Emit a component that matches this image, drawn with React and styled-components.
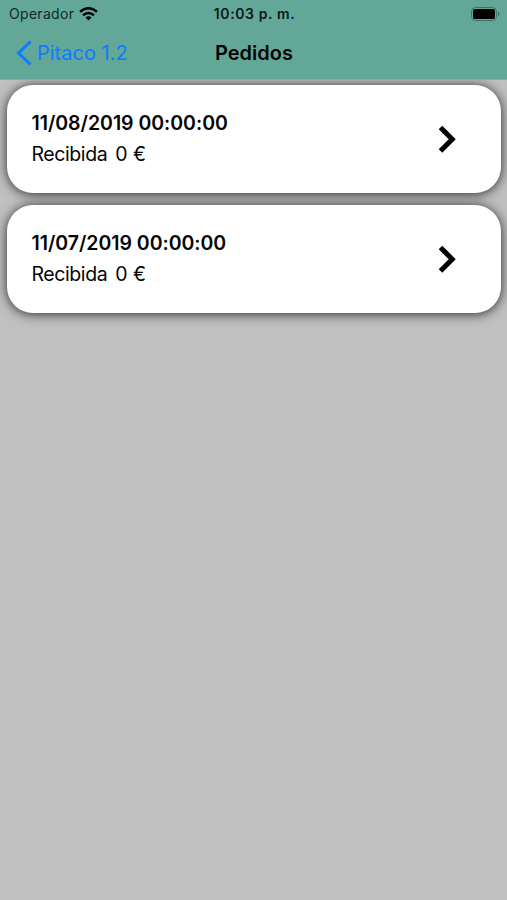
import React from "react"
import styled, { createGlobalStyle } from "styled-components"

const GlobalStyle = createGlobalStyle`
  body {
    margin: 0;
    background-color: #c0c0c0;
    font-family: Inter, "Liberation Sans", sans-serif;
    color: #050505;
  }
`
const Screen = styled.div`
  min-height: 900px;
  background-color: #c0c0c0;
`
const Header = styled.header`
  position: relative;
  z-index: 1;
  height: 80px;
  background-color: #63a798;
  border-bottom: 1px solid #92a6a2;
  box-sizing: border-box;
`
const StatusBar = styled.div`
  height: 27px;
  display: grid;
  grid-template-columns: 1fr auto 1fr;
  align-items: center;
  padding: 0 7px 0 9px;
  font-size: 14px;
`
const Carrier = styled.div`
  display: flex;
  align-items: center;
  gap: 5px;
  color: #102b25;
  letter-spacing: 0.3px;
`
const Time = styled.div`
  font-weight: 600;
  letter-spacing: 0.6px;
  color: #0b1b17;
`
const Battery = styled.svg`
  justify-self: end;
`
const NavBar = styled.div`
  height: 51px;
  display: grid;
  grid-template-columns: 1fr auto 1fr;
  align-items: center;
  padding: 0 16px;
  font-size: 20px;
`
const BackButton = styled.div`
  display: flex;
  align-items: center;
  gap: 5px;
  color: #0a7cff;
`
const Title = styled.div`
  font-weight: 600;
  padding-left: 1px;
`
const List = styled.div`
  display: flex;
  flex-direction: column;
  gap: 12px;
  padding: 5px 6px 0 7px;
`
const Card = styled.div`
  height: 108px;
  box-sizing: border-box;
  display: flex;
  align-items: center;
  justify-content: space-between;
  padding: 0 43px 0 24.5px;
  border-radius: 26px;
  background-color: white;
  box-shadow: 0 1px 12px rgba(0, 0, 0, 0.8);
`
const OrderDate = styled.div`
  font-size: 19.5px;
  font-weight: 600;
  line-height: 31px;
  letter-spacing: -0.03px;
`
const OrderStatus = styled.div`
  display: flex;
  gap: 8px;
  font-size: 19.5px;
  line-height: 31px;
`
const StatusName = styled.span`
  letter-spacing: -0.42px;
`

const orders = [
  { date: "11/08/2019 00:00:00", status: "Recibida", total: "0 €" },
  { date: "11/07/2019 00:00:00", status: "Recibida", total: "0 €" },
]

const App = () => {
  return (
    <Screen>
      <GlobalStyle />
      <Header>
        <StatusBar>
          <Carrier>
            <span>Operador</span>
            <svg width="19" height="14" viewBox="0 0 19 14" fill="none" stroke="black" strokeWidth="2.4">
              <path d="M1 4.800Q9.500-2.200 18 4.800" />
              <path d="M4 8.200Q9.500 3.800 15 8.200" />
              <path d="M6.500 10.500Q9.500 8.200 12.500 10.500L9.500 13.500Z" fill="black" stroke="none" />
            </svg>
          </Carrier>
          <Time>10:03 p. m.</Time>
          <Battery width="29" height="14" viewBox="0 0 29 14">
            <rect x="0.500" y="0.500" width="25" height="13" rx="4" fill="none" stroke="#417267" />
            <rect x="2" y="2" width="22" height="10" rx="2" />
            <path d="M27 4.500Q30 7 27 9.500Z" fill="#417267" />
          </Battery>
        </StatusBar>
        <NavBar>
          <BackButton>
            <svg width="16" height="26" viewBox="0 0 16 26" fill="none" stroke="currentColor" strokeWidth="3">
              <path d="M14.500 1.500L2.500 13L14.500 24.500" />
            </svg>
            <span>Pitaco 1.2</span>
          </BackButton>
          <Title>Pedidos</Title>
        </NavBar>
      </Header>
      <List>
        {orders.map(order => (
          <Card key={order.date}>
            <div>
              <OrderDate>{order.date}</OrderDate>
              <OrderStatus>
                <StatusName>{order.status}</StatusName>
                <span>{order.total}</span>
              </OrderStatus>
            </div>
            <svg width="20" height="30" viewBox="0 0 20 30" fill="none" stroke="black" strokeWidth="5">
              <path d="M2.500 3.500L14.200 15.200L2.500 26.900" />
            </svg>
          </Card>
        ))}
      </List>
    </Screen>
  )
}

export default App
